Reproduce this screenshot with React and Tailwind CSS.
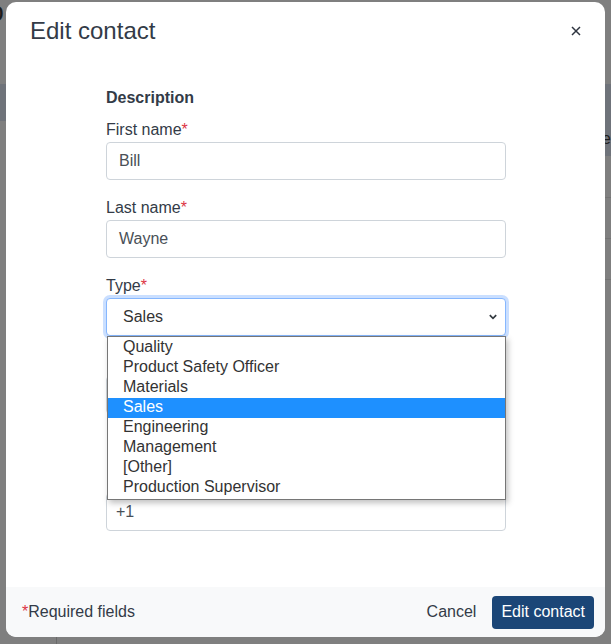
const Field = ({ label, value }) => (
  <div className="mb-4">
    <label className="block text-[16px] leading-6 text-[#333b47]">
      {label}
      <span className="text-[#dc3545]">*</span>
    </label>
    <div className="h-[38px] rounded-[4px] border border-[#ced4da] bg-white px-3 flex items-center text-[16px] text-[#495057]">
      {value}
    </div>
  </div>
);

const options = [
  'Quality',
  'Product Safety Officer',
  'Materials',
  'Sales',
  'Engineering',
  'Management',
  '[Other]',
  'Production Supervisor',
];

const TypeSelect = () => (
  <div className="mb-4">
    <label className="block text-[16px] leading-6 text-[#333b47]">
      Type<span className="text-[#dc3545]">*</span>
    </label>
    <div className="relative">
      <div className="h-[38px] rounded-[4px] border border-[#86b7fe] shadow-[0_0_0_3px_rgba(13,110,253,0.22)] bg-white pl-4 pr-[8px] flex items-center justify-between text-[16px] text-[#333]">
        <span>Sales</span>
        <svg width="8" height="6" viewBox="0 0 8 6">
          <path d="M0.8 1.2 L4 4.4 L7.2 1.2" fill="none" stroke="#343a40" strokeWidth="1.7" />
        </svg>
      </div>
      {/* open option list */}
      <div className="absolute left-px right-0 top-[38px] z-10 border border-[#767676] bg-white py-px shadow-[2px_3px_6px_rgba(0,0,0,0.25)]">
        {options.map((o) => (
          <div
            key={o}
            className={`h-5 pl-[15px] text-[16px] leading-[17px] ${
              o === 'Sales' ? 'bg-[#1e90ff] text-white' : 'text-[#333]'
            }`}
          >
            {o}
          </div>
        ))}
      </div>
    </div>
  </div>
);

export default function App() {
  return (
    <div className="relative h-[644px] w-[611px] overflow-hidden bg-[#7f7f7f] font-['Liberation_Sans',Arial,sans-serif]">
      {/* page behind the overlay */}
      <div className="h-[88px]">
        <div className="-ml-[32px] -mt-[4px] text-[28px] leading-[32px] text-[#1c1c1c]">Co</div>
      </div>
      <div className="h-[37px] bg-[#6f737a]"></div>
      <div className="flex justify-end">
        <div className="w-[60px] h-[35px] bg-[#6f737a] flex items-center justify-end text-[16px] text-[#1c1c1c] whitespace-nowrap">
          Phone
        </div>
      </div>
      <div className="flex justify-end">
        <div className="w-[60px]">
          <div className="h-[42px] border-b border-[#737373]"></div>
          <div className="h-[41px] border-b border-[#737373]"></div>
          <div className="h-[41px] border-b border-[#737373]"></div>
        </div>
      </div>
      <div className="absolute left-[56px] bottom-0 h-[10px] border-l border-[#6a6a6a]"></div>

      {/* modal */}
      <div className="absolute left-[6px] top-[2px] w-[599px] h-[635px] bg-white rounded-[10px] flex flex-col overflow-hidden">
        <div className="flex items-start justify-between pl-6 pr-[24px] pt-[14px]">
          <h2 className="text-[24px] leading-[29px] text-[#333b47]">Edit contact</h2>
          <button className="mt-[10px] w-[10px] h-[10px] flex items-center justify-center">
            <svg width="10" height="10" viewBox="0 0 10 10">
              <path d="M1 1 L9 9 M9 1 L1 9" stroke="#2f3540" strokeWidth="1.5" />
            </svg>
          </button>
        </div>

        <div className="flex-1 pl-[100px] pt-[41px]">
          <div className="w-[400px]">
            <div className="text-[16px] leading-6 font-bold text-[#333b47] mb-[8px]">Description</div>
            <Field label="First name" value="Bill" />
            <Field label="Last name" value="Wayne" />
            <TypeSelect />
            {/* fields hidden under the open list */}
            <div className="mb-4">
              <div className="h-6"></div>
              <div className="h-[38px] rounded-[4px] border border-[#ced4da] bg-white"></div>
            </div>
            <div>
              <div className="h-[63px]"></div>
              <div className="h-[38px] rounded-[4px] border border-[#ced4da] bg-white px-[9px] flex items-center text-[16px] text-[#495057]">
                +1
              </div>
            </div>
          </div>
        </div>

        <div className="h-[50px] bg-[#f8f9fa] flex items-center justify-between pl-4 pr-[11px]">
          <div className="text-[16px] text-[#333b47]">
            <span className="text-[#dc3545]">*</span>Required fields
          </div>
          <div className="flex items-center gap-1">
            <button className="px-3 text-[16px] text-[#333b47]">Cancel</button>
            <button className="h-[33px] rounded-[4px] bg-[#1b4677] px-[9px] text-[16px] text-white">
              Edit contact
            </button>
          </div>
        </div>
      </div>
    </div>
  );
}
